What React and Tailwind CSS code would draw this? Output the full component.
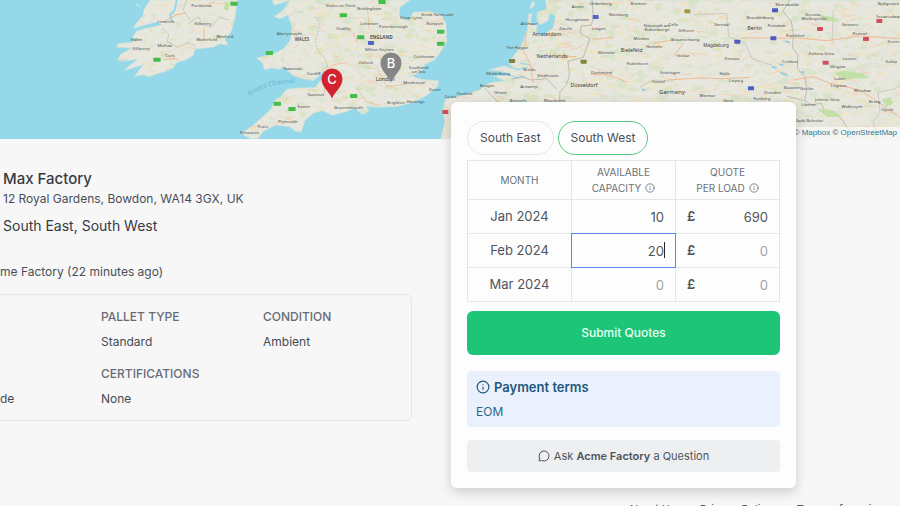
import { useState } from "react";
import { Info, MessageCircle } from "lucide-react";

const IRELAND =
  "M450 0 L432 28 428 48 408 70 400 86 438 74 470 66 486 74 440 84 412 92 396 112 420 118 388 128 356 130 348 142 396 144 362 162 352 182 384 178 358 186 412 178 370 212 430 194 402 230 430 224 446 230 492 216 520 204 528 190 562 178 580 166 584 148 640 142 660 132 684 136 676 118 694 94 706 50 712 0Z";
const BRITAIN =
  "M126 0 L132 16 178 2 160 30 132 50 150 56 174 46 186 84 180 122 160 146 130 162 80 174 96 188 104 210 124 204 150 208 160 198 188 226 216 236 250 242 270 226 284 206 276 236 256 262 204 264 170 268 152 290 134 300 124 326 96 352 66 378 36 400 44 408 64 417 86 415 100 394 136 376 178 380 196 394 214 396 226 360 250 340 278 332 306 346 348 336 374 324 398 344 418 332 408 320 452 322 500 320 552 306 588 288 624 258 626 242 574 238 546 228 574 214 584 194 614 180 636 150 650 124 648 70 634 46 600 34 550 36 540 56 522 60 508 46 510 22 540 0Z";
const CONTINENT =
  "M316 0 L320 28 292 36 290 60 302 74 324 62 330 40 346 48 340 82 312 106 288 98 292 74 272 76 276 40 266 42 262 90 244 138 214 176 232 182 206 192 222 202 188 198 146 210 196 216 208 226 160 228 194 242 150 248 118 270 72 286 16 298 8 332 14 366 2 417 1400 417 1400 0Z";

const BRITISH_CITIES = [
  ["Stoke-on-Trent", 332, 21], ["Nottingham", 418, 31], ["Leicester", 418, 75],
  ["Peterborough", 490, 83], ["Dudley", 340, 91], ["Aberystwyth", 178, 105],
  ["Kings Lynn", 543, 58], ["Great Yarmouth", 622, 49], ["Norwich", 614, 75],
  ["Milton Keynes", 448, 153], ["Colchester", 583, 173], ["Oxford", 407, 191],
  ["Swansea", 188, 209], ["Cardiff", 251, 225], ["Southend", 566, 207],
  ["on Sea", 566, 220], ["Maidstone", 552, 252], ["Dover", 615, 273],
  ["Brighton", 498, 312], ["Hastings", 557, 308], ["Bournemouth", 356, 327],
  ["Taunton", 257, 289], ["Exeter", 222, 325], ["Plymouth", 173, 370],
  ["Truro", 98, 385], ["Penzance", 58, 403],
];
const IRISH_CITIES = [
  ["Portlaoise", 604, 21], ["Limerick", 498, 70], ["Kilkenny", 609, 74],
  ["Wexford", 674, 114], ["Waterford", 620, 124], ["Tralee", 409, 123],
  ["Mallow", 494, 140], ["Killarney", 424, 151], ["Cork", 510, 172],
];
const CONTINENTAL_CITIES = [
  ["Oldenburg", 482, 15], ["Bremen", 596, 15], ["Assen", 413, 25], ["Nienburg", 535, 47],
  ["Hoogeveen", 412, 63], ["Alkmaar", 267, 76], ["Zwolle", 377, 91], ["Lingen", 477, 91],
  ["Neustadt am", 651, 80], ["Rübenberge", 651, 93], ["Celle", 700, 77], ["Minden", 604, 120],
  ["Hameln", 642, 145], ["The Hague", 231, 147], ["Münster", 500, 163],
  ["Paderborn", 592, 194], ["Middelburg", 174, 224], ["Breda", 268, 213],
  ["Eindhoven", 324, 232], ["Dortmund", 485, 222], ["Göttingen", 690, 221],
  ["Kassel", 656, 248], ["Bruges", 141, 262], ["Antwerp", 267, 263],
  ["Ghent", 181, 282], ["Dunkirk", 74, 284], ["Calais", 31, 295],
  ["Brussels", 234, 305], ["Maastricht", 344, 305], ["Gifhorn", 738, 96],
  ["Braunschweig", 736, 124], ["Stendal", 846, 78], ["Brandenburg", 960, 58],
  ["Eberswalde", 1042, 17], ["Potsdam", 1010, 82], ["Frankfurt", 1066, 112],
  ["Goslar", 730, 170], ["Dessau", 876, 181], ["Cottbus", 1050, 189],
  ["Halle", 854, 226], ["Leipzig", 888, 245], ["Bautzen", 1056, 266], ["Görlitz", 1100, 269],
  ["Weimar", 802, 291], ["Gera", 864, 305], ["Freiberg", 966, 300], ["Dresden", 998, 283],
  ["Gorzów", 1118, 48], ["Wielkopolski", 1122, 61], ["Gniezno", 1230, 78],
  ["Poznań", 1260, 105], ["Zielona Góra", 1144, 166], ["Leszno", 1229, 180],
  ["Głogów", 1192, 203], ["Lubin", 1199, 239], ["Legnica", 1196, 262],
  ["Wrocław", 1267, 275], ["Kalisz", 1354, 190], ["Konin", 1360, 128],
  ["Jelenia Góra", 1162, 302], ["Liberec", 1106, 318], ["Wałbrzych", 1236, 325],
  ["Brzeg", 1304, 308], ["Opole", 1342, 332], ["Mladá Boleslav", 1104, 366],
  ["Bydgoszcz", 1345, 14], ["Inowrocław", 1344, 53],
];
const BRITISH_SHIELDS = [[12, 11], [340, 46], [456, 6], [392, 112], [632, 95], [632, 131], [118, 159], [142, 311], [186, 327], [371, 288]];
const CONTINENTAL_SHIELDS = [
  [467, 51, "#5663c6"], [216, 183, "#83813b"], [431, 185, "#83813b"],
  [742, 34, "#a29a43"], [1005, 31, "#4e5bc0"], [892, 125, "#4e5bc0"],
  [1000, 115, "#4e5bc0"], [933, 265, "#4e5bc0"], [1140, 87, "#cf5061"],
  [1318, 63, "#cf5061"], [1278, 117, "#cf5061"], [1157, 188, "#cf5061"], [16, 336, "#cf5061"],
];

function scatter(count, width, seed) {
  let state = seed;
  const next = () => {
    state = (state * 16807) % 2147483647;
    return state / 2147483647;
  };
  return Array.from({ length: count }, () => ({
    x: next() * width,
    y: next() * 417,
    a: next(),
    b: next(),
    c: next(),
  }));
}

function Terrain({ id, outline, width, seed, density }) {
  const patches = scatter(density, width, seed);
  const roads = scatter(density, width, seed + 91);
  return (
    <>
      <clipPath id={id}>
        <path d={outline} />
      </clipPath>
      <path d={outline} fill="#e7e7de" stroke="#c3dedd" strokeWidth="2" />
      <g clipPath={`url(#${id})`}>
        {patches.map((p, i) => (
          <ellipse
            key={i}
            cx={p.x}
            cy={p.y}
            rx={3 + p.a * 14}
            ry={2 + p.b * 8}
            fill={p.c > 0.6 ? "#d0e2bd" : "#e0e3d3"}
            opacity="0.6"
          />
        ))}
        {roads.map((r, i) => (
          <path
            key={i}
            d={`M${r.x} ${r.y}q${r.a * 20} ${r.b * 16 - 8} ${10 + r.a * 26} ${r.c * 30 - 15}`}
            fill="none"
            stroke={["#f5c9a6", "#f4e3a2", "#d2d2ca", "#f3dc9d"][i % 4]}
            strokeWidth={i % 4 === 2 ? 1 : 2}
          />
        ))}
      </g>
    </>
  );
}

function Cities({ items }) {
  return (
    <g fill="#4c4e4b" fontSize="13" textAnchor="middle">
      {items.map(([name, x, y]) => (
        <text key={name} x={x} y={y}>{name}</text>
      ))}
    </g>
  );
}

function Pin({ x, y, color, letter }) {
  return (
    <g transform={`translate(${x} ${y})`}>
      <path d="M0 19.500C-3 12-10.500 8-10.500 0A10.500 10.500 0 0 1 10.500 0C10.500 8 3 12 0 19.500Z" fill={color} />
      <text y="4.500" fontSize="13" fontWeight="500" fill="#fff" textAnchor="middle">{letter}</text>
    </g>
  );
}

function RouteMap() {
  return (
    <div className="relative h-[139px] bg-[#94d8ea]">
      <svg
        className="block h-full w-full font-['Noto_Sans',sans-serif]"
        viewBox="0 0 900 139"
        preserveAspectRatio="xMidYMin slice"
        role="img"
        aria-label="Map of delivery locations"
      >
        <g transform="scale(0.33333)">
          <path d="M404 8l14 8 5 7-12-6z" fill="#d5e3dc" />
          <Terrain id="ireland" outline={IRELAND} width={720} seed={417} density={200} />
          <path d="M530 0L524 30 510 46 516 64" fill="none" stroke="#94d8ea" strokeWidth="6" />
          <path d="M486 84l20 18-4 22 30 18 34-14 22 10M566 70l30-20 10 24 30 8 20-30 30 8M560 0l-10 30 20 30" fill="none" stroke="#bcbdb7" strokeWidth="2" />
          <path d="M612 88v30M490 66l36-20 30-8M490 178l40-2M626 12l18-6" fill="none" stroke="#f3b489" strokeWidth="3" />
          <path d="M676 4l12 6-4 22-12-4z" fill="#bfe09d" />
          <Cities items={IRISH_CITIES} />
          <rect x="460" y="173" width="22" height="12" rx="2" fill="#43bd4b" />
        </g>
        <g transform="translate(230 0) scale(0.33333)">
          <Terrain id="britain" outline={BRITAIN} width={660} seed={823} density={420} />
          <path d="M256 50q20 20 6 50t10 60 20 44" fill="none" stroke="#b5b7b0" strokeWidth="2" strokeDasharray="8 3" />
          <path d="M412 20l6 70M350 80l20 18 12 30M290 210l20-16 40-6M280 290l10-60M382 264l24 40 40 12M440 200l30 60 60-8" fill="none" stroke="#f3b489" strokeWidth="2" />
          <Cities items={BRITISH_CITIES} />
          <text x="454" y="117" fontSize="14" fontWeight="700" textAnchor="middle" fill="#555">ENGLAND</text>
          <text x="216" y="124" fontSize="13" fontWeight="700" textAnchor="middle" fill="#666">WALES</text>
          <text x="466" y="244" fontSize="16" textAnchor="middle" fill="#333">London</text>
          {BRITISH_SHIELDS.map(([x, y]) => (
            <rect key={`${x}-${y}`} x={x - 11} y={y - 6} width="22" height="12" rx="2" fill="#43bd4b" />
          ))}
          <rect x="414" y="123" width="18" height="12" rx="2" fill="#5663c6" />
          <path id="channel" d="M58 288Q120 246 210 250" fill="none" />
          <text fontSize="20" fill="#67b5d2">
            <textPath href="#channel">Bristol Channel</textPath>
          </text>
        </g>
        <g transform="translate(440 0) scale(0.33333)">
          <Terrain id="continent" outline={CONTINENT} width={1400} seed={1291} density={900} />
          <path d="M270 26l4-16 10-6-2 14zM292 4l16-6" fill="#e6e7dc" stroke="#e6e7dc" />
          <path d="M204 200l30 8 30-6M200 220l30 14 24-4M240 190l30 4" fill="none" stroke="#94d8ea" strokeWidth="4" />
          <path d="M456 0l4 50-6 26-30 2-4 22 30 16-10 26-10 30-46 12 4 40-8 30-20 20-2 50M134 264l20 22 20 20M214 238l30-8 30 10 46-4 30 32" fill="none" stroke="#a5a7a0" strokeWidth="2" />
          <path d="M1050 0l-22 34 26 30 6 40-2 40 16 20-2 40 24 30 4 40-6 28 20 12 30-4 10 22 30 4 26 28 20 34M1040 288l50 14" fill="none" stroke="#a5a7a0" strokeWidth="2" />
          <path d="M1310 417l-10-50 20-30-6-60 50-10 36-20M760 44l100-4 6 70 50 20 20 46 60 20M600 260l40-20 60 4M1180 30l-4 100" fill="none" stroke="#bcbdb7" strokeWidth="2" />
          <path d="M900 114h170l90 8 100-14 140 10M680 240l100-6 70 2 80-4M1060 240l60-10 50 20 90 20 60 40 80 56M460 118l60-6M370 168l40 2M450 222l60 4 50 20M640 130l60-10M700 170l30-40M260 100l-10 50 20 40 10 60" fill="none" stroke="#f4b891" strokeWidth="3" />
          <path d="M1180 220l34-8 54 8 16 14-70 4zM1130 326l44 4 30 20-40 2zM1140 44l40 8 20 14-50-4zM1326 298l24-6 10 18-20 10z" fill="#c2e0a6" />
          <path d="M1018 192l12 4M1022 218l20 8M1036 124l14 4M606 268l10 4M1084 214l10 4M996 200l14 4" stroke="#94cfe2" strokeWidth="6" />
          <Cities items={CONTINENTAL_CITIES} />
          <g fill="#444" fontSize="16" textAnchor="middle">
            <text x="321" y="109">Amsterdam</text>
            <text x="336" y="173">Netherlands</text>
            <text x="575" y="156">Bielefeld</text>
            <text x="432" y="260">Düsseldorf</text>
            <text x="696" y="283" fontSize="18">Germany</text>
            <text x="944" y="91">Berlin</text>
            <text x="828" y="141" fontSize="14">Magdeburg</text>
          </g>
          {CONTINENTAL_SHIELDS.map(([x, y, fill]) => (
            <rect key={`${x}-${y}`} x={x - 9} y={y - 6} width="18" height="12" rx="2" fill={fill} />
          ))}
        </g>
        <g className="font-[Inter,sans-serif]">
          <Pin x={391} y={63} color="#858585" letter="B" />
          <Pin x={332} y={79} color="#d2232f" letter="C" />
        </g>
      </svg>
      <p className="absolute right-0 bottom-0 bg-white/60 pr-[3px] pl-1 font-['Liberation_Sans',sans-serif] text-[8px] leading-3 text-[#444]">
        © <a href="#mapbox" className="text-[#2a7a9b]">Mapbox</a> ©{" "}
        <a href="#osm" className="text-[#2a7a9b]">OpenStreetMap</a>
      </p>
    </div>
  );
}

function Detail({ term, children }) {
  return (
    <div>
      <dt className="h-[25px] font-medium text-[#676c74]">{term}</dt>
      <dd className="text-[#464b53]">{children}</dd>
    </div>
  );
}

function FactoryDetails() {
  return (
    <section className="min-w-0 flex-1 overflow-hidden pt-[30px] pr-[39px] text-[#4a4f57]">
      <div className="pl-[3px]">
        <h1 className="text-[15px] leading-5 font-medium text-[#363b43]">Max Factory</h1>
        <p className="text-[12px] leading-5">12 Royal Gardens, Bowdon, WA14 3GX, UK</p>
        <p className="mt-[7px] text-[14px] leading-5 text-[#363b43]">South East, South West</p>
      </div>
      <p className="mt-[26px] text-[12px] leading-5">me Factory (22 minutes ago)</p>
      <dl className="mt-3 grid grid-cols-[101px_162px_1fr] gap-y-4 rounded-r-md border border-l-0 border-[#e5e6e8] pt-[14px] pb-[13px] text-[12px] leading-4">
        <div />
        <Detail term="PALLET TYPE">Standard</Detail>
        <Detail term="CONDITION">Ambient</Detail>
        <Detail term="">de</Detail>
        <Detail term="CERTIFICATIONS">None</Detail>
      </dl>
    </section>
  );
}

const REGIONS = ["South East", "South West"];
const INITIAL_ROWS = [
  { month: "Jan 2024", capacity: "10", quote: "690" },
  { month: "Feb 2024", capacity: "20", quote: "" },
  { month: "Mar 2024", capacity: "", quote: "" },
];
const CELL = "border border-[#e5e6ea] p-0 font-normal";
const FIELD = "block h-[33px] w-full min-w-0 bg-transparent pr-[11px] text-right outline-none placeholder:text-[#a2a5aa]";

function QuoteCard() {
  const [region, setRegion] = useState("South West");
  const [rows, setRows] = useState(INITIAL_ROWS);
  const [active, setActive] = useState(1);
  const update = (index, key) => (event) =>
    setRows(rows.map((row, i) => (i === index ? { ...row, [key]: event.target.value } : row)));

  return (
    <form
      onSubmit={(event) => event.preventDefault()}
      className="relative mr-[104px] -mt-[37px] w-[345px] shrink-0 rounded-md bg-[#fdfdfd] px-4 pt-[19px] pb-4 shadow-[0_4px_12px_rgba(0,0,0,0.18)]"
    >
      <div className="flex gap-1 text-[12px]">
        {REGIONS.map((name) => (
          <button
            key={name}
            type="button"
            aria-pressed={region === name}
            onClick={() => setRegion(name)}
            className={`h-[34px] rounded-full border px-3 text-[#4a4f57] ${region === name ? "border-[#5cc983]" : "border-[#e5e6e8]"}`}
          >
            {name}
          </button>
        ))}
      </div>
      <table className="mt-[5px] w-full table-fixed border-collapse text-center text-[13px] text-[#4f545c]">
        <thead className="text-[10px] leading-4 text-[#6b7077]">
          <tr className="h-[39px]">
            <th scope="col" className={CELL}>MONTH</th>
            <th scope="col" className={CELL}>
              AVAILABLE
              <span className="flex items-center justify-center gap-1">CAPACITY <Info size={10} /></span>
            </th>
            <th scope="col" className={CELL}>
              QUOTE
              <span className="flex items-center justify-center gap-1">PER LOAD <Info size={10} /></span>
            </th>
          </tr>
        </thead>
        <tbody>
          {rows.map((row, i) => (
            <tr key={row.month} className="h-[34px]">
              <th scope="row" className={CELL}>{row.month}</th>
              <td className={CELL}>
                <div className="relative">
                  <input
                    aria-label={`Available capacity, ${row.month}`}
                    value={row.capacity}
                    placeholder="0"
                    onFocus={() => setActive(i)}
                    onChange={update(i, "capacity")}
                    className={`${FIELD} caret-transparent`}
                  />
                  {active === i && (
                    <>
                      <span aria-hidden="true" className="pointer-events-none absolute -inset-px border border-[#5b84f5]" />
                      <span aria-hidden="true" className="pointer-events-none absolute top-2 right-[10px] h-4 w-px bg-[#22262c]" />
                    </>
                  )}
                </div>
              </td>
              <td className={CELL}>
                <label className="flex items-center pl-[11px]">
                  <span className="font-semibold">£</span>
                  <input
                    aria-label={`Quote per load, ${row.month}`}
                    value={row.quote}
                    placeholder="0"
                    onFocus={() => setActive(-1)}
                    onChange={update(i, "quote")}
                    className={FIELD}
                  />
                </label>
              </td>
            </tr>
          ))}
        </tbody>
      </table>
      <button type="submit" className="mt-[9px] h-11 w-full rounded-md bg-[#1cc578] text-[12px] font-medium text-[#e8fff3]">
        Submit Quotes
      </button>
      <section className="mt-4 rounded bg-[#eaf1fc] px-[9px] pt-[6px] pb-[5px] text-[#2c668a]">
        <h2 className="flex items-center gap-1 text-[13px] leading-5 font-semibold text-[#1f587c]">
          <Info size={14} strokeWidth={2} /> Payment terms
        </h2>
        <p className="mt-[5px] text-[12px] leading-5">EOM</p>
      </section>
      <button type="button" className="mt-[13px] flex h-8 w-full items-center justify-center gap-1 rounded bg-[#eeeff1] text-[11px] text-[#4f545c]">
        <MessageCircle size={12} />
        <span>Ask <strong className="font-semibold">Acme Factory</strong> a Question</span>
      </button>
    </form>
  );
}

export default function App() {
  return (
    <div className="h-screen overflow-hidden bg-[#f7f7f7] font-[Inter,sans-serif]">
      <RouteMap />
      <main className="flex items-start">
        <FactoryDetails />
        <QuoteCard />
      </main>
      <footer className="mt-[13px] flex justify-end gap-6 pr-4 text-[11px] leading-4 text-[#555a61]">
        <a href="#about">About Us</a>
        <a href="#privacy">Privacy Policy</a>
        <a href="#terms">Terms of service</a>
      </footer>
    </div>
  );
}
